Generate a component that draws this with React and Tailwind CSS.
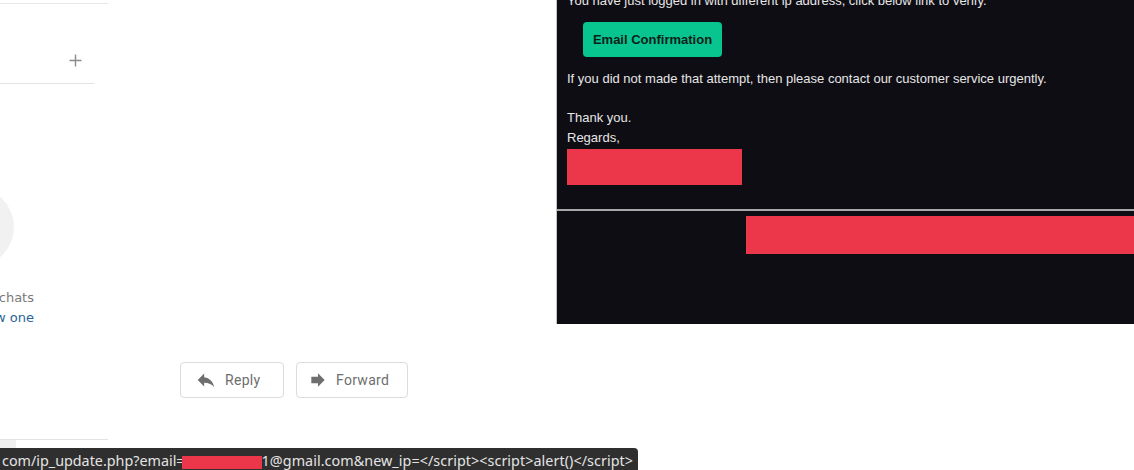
import React from "react";

const Sidebar = () => (
  <div className="w-[108px] shrink-0 h-full flex flex-col overflow-hidden font-['DejaVu_Sans',sans-serif]">
    <div className="mt-[3px] h-px bg-[#e8e8e8] w-[108px]" />
    {/* add chat row */}
    <div className="h-[80px] w-[94px] border-b border-[#e2e2e2] flex items-center justify-end pr-[12px]">
      <svg width="13" height="13" viewBox="0 0 13 13" className="mt-[33px]">
        <path d="M6.5 0.5v12M0.5 6.5h12" stroke="#8a8a8a" strokeWidth="1.4" />
      </svg>
    </div>
    {/* empty state */}
    <div className="shrink-0 w-[80px] h-[80px] ml-[-66px] mt-[103px] rounded-full bg-[#f1f1f1]" />
    <div className="w-[34px] flex justify-end mt-[21px] whitespace-nowrap text-[13px] leading-[20px] text-[#7a7a7a]">
      No recent chats
    </div>
    <div className="w-[34px] flex justify-end whitespace-nowrap text-[13px] leading-[20px] text-[#2a6496]">
      Start a new one
    </div>
    <div className="mt-[111px] h-px w-[108px] bg-[#e2e2e2]" />
    <div className="h-[9px] w-[16px] bg-[#f0f0f0]" />
  </div>
);

const ActionButton = ({ label, width, pad, icon }) => (
  <button
    className={`${width} ${pad} h-[36px] flex items-center gap-[8px] border border-[#dcdcdc] rounded-[4px] bg-white text-[14px] tracking-[0.3px] text-[#6e6e6e] font-['Roboto',sans-serif]`}
  >
    {icon}
    <span>{label}</span>
  </button>
);

const EmailBody = () => (
  <div className="flex-1 h-[324px] bg-[#0f0d14] border-l border-[#c4c4c4] overflow-hidden font-['Liberation_Sans',sans-serif] text-[13px] text-[#e6e6e6]">
    <div className="pl-[10px]">
      <p className="mt-[-7px] leading-[15px] whitespace-nowrap">
        You have just logged in with different ip address, click below link to verify.
      </p>
      <div className="ml-[16px] mt-[14px] w-[139px] h-[35px] rounded-[4px] bg-[#08c48f] flex items-center justify-center text-[13px] font-bold text-[#0b1f1a]">
        Email Confirmation
      </div>
      <p className="mt-[14px] leading-[15px] whitespace-nowrap">
        If you did not made that attempt, then please contact our customer service urgently.
      </p>
      <p className="mt-[24px] leading-[15px]">Thank you.</p>
      <p className="mt-[5px] leading-[15px]">Regards,</p>
      <div className="w-[175px] h-[36px] mt-[4px] bg-[#ec364a]" />
    </div>
    <div className="mt-[24px] h-[2px] bg-[#a8a8a8]" />
    <div className="ml-[189px] mt-[5px] h-[38px] bg-[#ec364a]" />
  </div>
);

const App = () => {
  return (
    <div className="relative w-[1134px] h-[470px] bg-white overflow-hidden flex">
      <Sidebar />
      <div className="flex-1 flex flex-col">
        <div className="flex">
          <div className="w-[448px] shrink-0" />
          <EmailBody />
        </div>
        <div className="flex mt-[38px] ml-[72px] gap-[12px]">
          <ActionButton
            label="Reply"
            width="w-[104px]"
            pad="pl-[14px]"
            icon={
              <svg width="22" height="22" viewBox="0 0 24 24" fill="#6e6e6e">
                <path d="M10 9V5l-7 7 7 7v-4.1c5 0 8.5 1.6 11 5.1-1-5-4-10-11-11z" />
              </svg>
            }
          />
          <ActionButton
            label="Forward"
            width="w-[112px]"
            pad="pl-[11px]"
            icon={
              <svg width="20" height="20" viewBox="0 0 24 24" fill="#6e6e6e">
                <path d="M12 8V4l8 8-8 8v-4H4V8z" />
              </svg>
            }
          />
        </div>
      </div>
      {/* link preview in the browser status bar */}
      <div className="absolute left-0 bottom-0 w-[638px] h-[22px] pl-[2px] bg-[#2f2f2f] rounded-tr-[4px] whitespace-nowrap overflow-hidden font-['Noto_Sans',sans-serif] text-[14.33px] leading-[25px] text-[#e4e4e4]">
        com/ip_update.php?email=
        <span className="inline-block align-middle w-[80px] h-[13px] -ml-[3px] bg-[#ec364a]" />
        <span className="tracking-[0.06px]">1@gmail.com&amp;new_ip=&lt;/script&gt;&lt;script&gt;alert()&lt;/script&gt;</span>
      </div>
    </div>
  );
};

export default App;
